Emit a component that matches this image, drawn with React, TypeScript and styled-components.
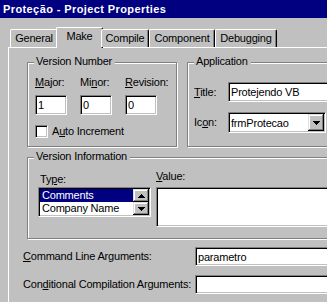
import React from 'react';
import styled, { createGlobalStyle, css } from 'styled-components';

const Global = createGlobalStyle`
  html, body { margin: 0; padding: 0; background: #c0c0c0; }
  body { font-family: "Liberation Sans", Arial, sans-serif; font-size: 11px; color: #000; letter-spacing: -0.2px; }
  * { box-sizing: border-box; }
`;

const sunken = css`
  background: #fff;
  border: 1px solid;
  border-color: #808080 #fff #fff #808080;
  box-shadow: inset 1px 1px #000, inset -1px -1px #c0c0c0;
`;

const raised = css`
  background: #c0c0c0;
  box-shadow: inset -1px -1px #000, inset 1px 1px #dfdfdf, inset -2px -2px #808080, inset 2px 2px #fff;
`;

const Window = styled.div`
  width: 327px;
  height: 302px;
  overflow: hidden;
  background: #c0c0c0;
`;

const TitleBar = styled.div`
  height: 18px;
  background: #000080;
  color: #fff;
  font-weight: bold;
  line-height: 18px;
  padding-left: 3px;
  letter-spacing: 0.4px;
  white-space: nowrap;
`;

const Body = styled.div`
  padding: 9px 0 0 8px;
`;

const TabRow = styled.div`
  display: flex;
  align-items: flex-end;
  height: 20px;
  padding-left: 2px;
  position: relative;
  z-index: 1;
`;

const Tab = styled.div<{ $w: number; $active?: boolean }>`
  flex: none;
  width: ${(p) => p.$w + (p.$active ? 4 : 0)}px;
  height: ${(p) => (p.$active ? 21 : 18)}px;
  margin: 0 ${(p) => (p.$active ? -2 : 0)}px ${(p) => (p.$active ? -1 : 0)}px;
  background: #c0c0c0;
  border-top: 1px solid #fff;
  border-left: 1px solid #fff;
  border-right: 1px solid #000;
  border-radius: 2px 2px 0 0;
  box-shadow: inset -1px 0 #808080;
  padding-top: 2px;
  text-align: center;
  line-height: 13px;
  white-space: nowrap;
`;

const Panel = styled.div`
  width: 420px;
  height: 300px;
  border-top: 1px solid #fff;
  border-left: 1px solid #fff;
  padding: 14px 0 0 14px;
`;

const FrameRow = styled.div`
  display: flex;
  gap: 10px;
  margin-left: 4px;
`;

const Frame = styled.div<{ $w: number; $h: number }>`
  position: relative;
  flex: none;
  width: ${(p) => p.$w}px;
  height: ${(p) => p.$h}px;
  border: 1px solid #808080;
  box-shadow: inset 1px 1px #fff, 1px 1px #fff;
`;

const Legend = styled.span`
  position: absolute;
  top: -8px;
  left: 6px;
  padding: 0 3px 0 2px;
  background: #c0c0c0;
  line-height: 13px;
  white-space: nowrap;
`;

const VersionBody = styled.div`
  padding: 13px 0 0 7px;
`;

const VersionGrid = styled.div`
  display: grid;
  grid-template-columns: repeat(3, 45px);
`;

const Field = styled.div`
  display: flex;
  flex-direction: column;
  gap: 6px;
`;

const Label = styled.span<{ $ml?: number }>`
  line-height: 13px;
  white-space: nowrap;
  margin-left: ${(p) => p.$ml ?? 0}px;
`;

const TextBox = styled.div<{ $w: number; $h: number }>`
  ${sunken};
  flex: none;
  width: ${(p) => p.$w}px;
  height: ${(p) => p.$h}px;
  padding-left: 2px;
  display: flex;
  align-items: center;
  white-space: nowrap;
  overflow: hidden;
`;

const CheckRow = styled.div`
  display: flex;
  align-items: center;
  gap: 4px;
  margin-top: 10px;
`;

const CheckBox = styled.span`
  ${sunken};
  width: 13px;
  height: 13px;
`;

const AppBody = styled.div`
  padding: 19px 0 0 6px;
  display: flex;
  flex-direction: column;
  gap: 10px;
`;

const AppRow = styled.div`
  display: flex;
  align-items: center;
`;

const AppLabel = styled.span`
  width: 34px;
  line-height: 13px;
`;

const Combo = styled.div`
  ${sunken};
  width: 98px;
  height: 21px;
  padding: 1px 1px 1px 2px;
  display: flex;
  align-items: center;
`;

const ComboText = styled.span`
  flex: 1;
  white-space: nowrap;
`;

const ArrowButton = styled.span<{ $w: number; $h: number }>`
  ${raised};
  flex: none;
  width: ${(p) => p.$w}px;
  height: ${(p) => p.$h}px;
  display: flex;
  align-items: center;
  justify-content: center;
`;

const InfoFrame = styled(Frame)`
  margin: 10px 0 0 4px;
`;

const InfoBody = styled.div`
  display: flex;
  gap: 5px;
  padding: 12px 0 0 10px;
`;

const InfoCol = styled.div<{ $pt: number; $gap: number }>`
  display: flex;
  flex-direction: column;
  gap: ${(p) => p.$gap}px;
  padding-top: ${(p) => p.$pt}px;
`;

const ListBox = styled.div`
  ${sunken};
  width: 113px;
  height: 30px;
  padding: 1px;
  display: flex;
`;

const ListItems = styled.div`
  flex: 1;
  display: flex;
  flex-direction: column;
`;

const ListItem = styled.div<{ $sel?: boolean }>`
  height: 13px;
  line-height: 13px;
  padding-left: 2px;
  white-space: nowrap;
  background: ${(p) => (p.$sel ? '#000080' : 'transparent')};
  color: ${(p) => (p.$sel ? '#fff' : '#000')};
`;

const ScrollCol = styled.div`
  width: 16px;
  display: flex;
  flex-direction: column;
`;

const ArgRow = styled.div<{ $mt: number }>`
  display: grid;
  grid-template-columns: 172px 200px;
  align-items: center;
  margin-top: ${(p) => p.$mt}px;
`;

const Arrow = ({ up }: { up?: boolean }) => (
  <svg width="7" height="4" viewBox="0 0 7 4" shapeRendering="crispEdges" style={{ transform: up ? undefined : 'scaleY(-1)' }}>
    <path d="M3 0h1v1h1v1h1v1h1v1H0V3h1V2h1V1h1z" fill="#000" />
  </svg>
);

export default function App() {
  return (
    <>
      <Global />
      <Window>
        <TitleBar>Proteção - Project Properties</TitleBar>
        <Body>
          <TabRow>
            <Tab $w={48}>General</Tab>
            <Tab $w={43} $active>Make</Tab>
            <Tab $w={48}>Compile</Tab>
            <Tab $w={66}>Component</Tab>
            <Tab $w={62}>Debugging</Tab>
          </TabRow>
          <Panel>
            <FrameRow>
              <Frame $w={150} $h={85}>
                <Legend>Version Number</Legend>
                <VersionBody>
                  <VersionGrid>
                    <Field>
                      <Label><u>M</u>ajor:</Label>
                      <TextBox $w={32} $h={20}>1</TextBox>
                    </Field>
                    <Field>
                      <Label>Mi<u>n</u>or:</Label>
                      <TextBox $w={32} $h={20}>0</TextBox>
                    </Field>
                    <Field>
                      <Label><u>R</u>evision:</Label>
                      <TextBox $w={32} $h={20}>0</TextBox>
                    </Field>
                  </VersionGrid>
                  <CheckRow>
                    <CheckBox />
                    <Label>A<u>u</u>to Increment</Label>
                  </CheckRow>
                </VersionBody>
              </Frame>
              <Frame $w={170} $h={85}>
                <Legend>Application</Legend>
                <AppBody>
                  <AppRow>
                    <AppLabel><u>T</u>itle:</AppLabel>
                    <TextBox $w={120} $h={20}>Protejendo VB</TextBox>
                  </AppRow>
                  <AppRow>
                    <AppLabel>Ic<u>o</u>n:</AppLabel>
                    <Combo>
                      <ComboText>frmProtecao</ComboText>
                      <ArrowButton $w={16} $h={17}><Arrow /></ArrowButton>
                    </Combo>
                  </AppRow>
                </AppBody>
              </Frame>
            </FrameRow>
            <InfoFrame $w={330} $h={82}>
              <Legend>Version Information</Legend>
              <InfoBody>
                <InfoCol $pt={3} $gap={1}>
                  <Label $ml={2}>Ty<u>p</u>e:</Label>
                  <ListBox>
                    <ListItems>
                      <ListItem $sel>Comments</ListItem>
                      <ListItem>Company Name</ListItem>
                    </ListItems>
                    <ScrollCol>
                      <ArrowButton $w={16} $h={13}><Arrow up /></ArrowButton>
                      <ArrowButton $w={16} $h={13}><Arrow /></ArrowButton>
                    </ScrollCol>
                  </ListBox>
                </InfoCol>
                <InfoCol $pt={0} $gap={4}>
                  <Label><u>V</u>alue:</Label>
                  <TextBox $w={200} $h={40} />
                </InfoCol>
              </InfoBody>
            </InfoFrame>
            <ArgRow $mt={8}>
              <Label><u>C</u>ommand Line Arguments:</Label>
              <TextBox $w={200} $h={19}>parametro</TextBox>
            </ArgRow>
            <ArgRow $mt={9}>
              <Label>Con<u>d</u>itional Compilation Arguments:</Label>
              <TextBox $w={200} $h={19} />
            </ArgRow>
          </Panel>
        </Body>
      </Window>
    </>
  );
}
